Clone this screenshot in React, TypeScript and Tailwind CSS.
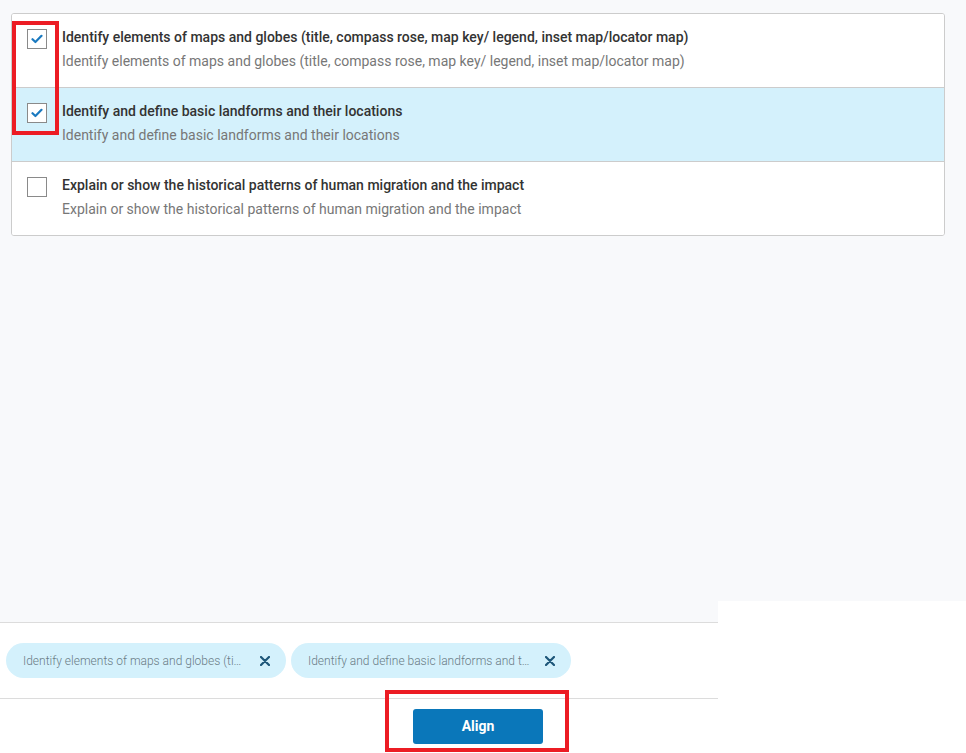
import React from 'react'

type Standard = {
  id: string
  title: string
  checked: boolean
  active?: boolean
}

const STANDARDS: Standard[] = [
  {
    id: 'maps',
    title:
      'Identify elements of maps and globes (title, compass rose, map key/ legend, inset map/locator map)',
    checked: true,
  },
  {
    id: 'landforms',
    title: 'Identify and define basic landforms and their locations',
    checked: true,
    active: true,
  },
  {
    id: 'migration',
    title: 'Explain or show the historical patterns of human migration and the impact',
    checked: false,
  },
]

function Checkbox({ checked }: { checked: boolean }) {
  return (
    <span className="mt-[2px] flex h-[20px] w-[20px] shrink-0 items-center justify-center border border-[#8a8a8a] bg-white">
      {checked && (
        <svg width="12" height="10" viewBox="0 0 12 10" fill="none">
          <path
            d="M1.5 5.2 4.4 8 10.5 1.8"
            stroke="#1b7ac0"
            strokeWidth="2.2"
            strokeLinecap="round"
            strokeLinejoin="round"
          />
        </svg>
      )}
    </span>
  )
}

function StandardRow({ item }: { item: Standard }) {
  return (
    <div
      className={`flex h-[74px] gap-[15px] border-b border-[#cccccc] pt-[13px] pl-[15px] last:h-[73px] last:border-b-0 ${
        item.active ? 'bg-[#d4f1fc]' : 'bg-white'
      }`}
    >
      <Checkbox checked={item.checked} />
      <div className="flex flex-col gap-[4px]">
        <p className="text-[14px] leading-[20px] font-medium text-[#333333]">
          {item.title}
        </p>
        <p className="text-[14px] leading-[20px] text-[#777777]">{item.title}</p>
      </div>
    </div>
  )
}

function Chip({ label }: { label: string }) {
  return (
    <div className="flex h-[35px] w-[280px] items-center rounded-full bg-[#d4f1fc] pl-[17px] pr-[15px]">
      <span className="w-[222px] truncate text-[12px] font-light text-[#6a7c86]">
        {label}
      </span>
      <button className="ml-auto flex h-[12px] w-[12px] items-center justify-center">
        <svg width="10" height="10" viewBox="0 0 10 10" fill="none">
          <path
            d="M1 1 9 9M9 1 1 9"
            stroke="#1d5679"
            strokeWidth="2.2"
            strokeLinecap="round"
          />
        </svg>
      </button>
    </div>
  )
}

export default function App() {
  const selected = STANDARDS.filter((s) => s.checked)

  return (
    <div className="relative h-[753px] w-[966px] overflow-hidden bg-white font-['Roboto','Liberation_Sans',sans-serif]">
      {/* Standards list */}
      <div className="h-[601px] bg-[#f8f9fb] pt-[13px] pl-[11px]">
        <div className="w-[934px] overflow-hidden rounded-[3px] border border-[#cccccc] bg-white">
          {STANDARDS.map((item) => (
            <StandardRow key={item.id} item={item} />
          ))}
        </div>
      </div>

      {/* Footer with selected chips + action */}
      <div className="flex">
        <div className="w-[718px]">
          <div className="h-[22px] border-b border-[#dcdcdc] bg-[#f8f9fb]" />
          <div className="flex h-[76px] items-center gap-[5px] border-b border-[#dcdcdc] pl-[6px]">
            {selected.map((s) => (
              <Chip key={s.id} label={s.title} />
            ))}
          </div>
          <div className="pt-[10px] pl-[413px]">
            <button className="flex h-[35px] w-[130px] items-center justify-center rounded-[3px] bg-[#0a77ba] text-[14px] font-bold text-white">
              Align
            </button>
          </div>
        </div>
        <div className="flex-1 bg-white" />
      </div>

      {/* Annotation highlights */}
      <div className="absolute top-[21px] left-[12px] h-[114px] w-[47px] border-4 border-[#ec1c24]" />
      <div className="absolute top-[690px] left-[385px] h-[62px] w-[184px] border-4 border-[#ec1c24]" />
    </div>
  )
}
